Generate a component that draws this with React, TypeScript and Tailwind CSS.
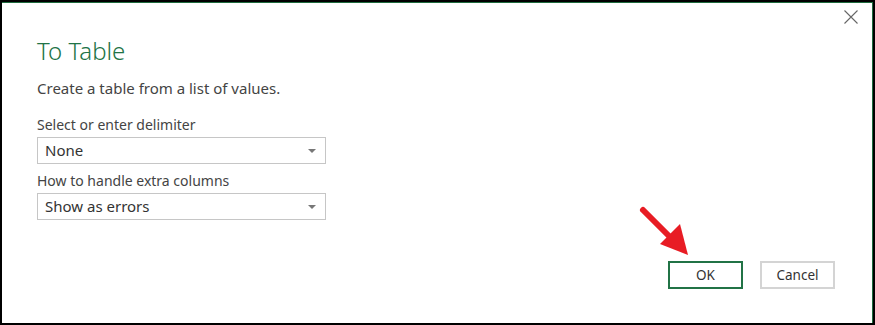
import type { FC } from 'react';

const Caret: FC = () => (
  <svg width="8" height="4" viewBox="0 0 8 4" className="shrink-0">
    <path d="M0 0 H8 L4 4 Z" fill="#777" />
  </svg>
);

const Select: FC<{ value: string }> = ({ value }) => (
  <div className="flex items-center justify-between w-[289px] h-[27px] border border-[#c6c6c6] pl-[7px] pr-[9px] text-[15px] text-[#333]">
    <span>{value}</span>
    <Caret />
  </div>
);

const App: FC = () => {
  return (
    <div
      className="relative w-[875px] h-[325px] bg-white border-2 border-black overflow-hidden"
      style={{ fontFamily: '"Noto Sans", "Open Sans", sans-serif' }}
    >
      <div className="h-full border-t border-r border-[#1e6b3e]">
        <button className="absolute right-[14px] top-[7px] text-[#666]">
          <svg width="16" height="16" viewBox="0 0 16 16">
            <path d="M1.5 1.5 L14.5 14.5 M14.5 1.5 L1.5 14.5" stroke="#666" strokeWidth="1.1" fill="none" />
          </svg>
        </button>

        <div className="flex flex-col h-full pl-[35px] pt-[33px] pr-[37px] pb-[34px]">
          <h1 className="text-[24px] font-light leading-[30px] text-[#217346]">To Table</h1>
          <p className="text-[15px] leading-[20px] text-[#444] mt-[12px]">Create a table from a list of values.</p>

          <label className="text-[14px] leading-[18px] text-[#444] mt-[18px]">Select or enter delimiter</label>
          <div className="mt-[3px]">
            <Select value="None" />
          </div>

          <label className="text-[14px] leading-[18px] text-[#444] mt-[8px]">How to handle extra columns</label>
          <div className="mt-[3px]">
            <Select value="Show as errors" />
          </div>

          <div className="flex justify-end gap-[17px] mt-auto">
            <button className="w-[75px] h-[28px] border-2 border-[#217346] text-[13.5px] text-[#333]">OK</button>
            <button className="w-[75px] h-[28px] border-2 border-[#d4d4d4] text-[13.5px] text-[#333]">Cancel</button>
          </div>
        </div>

        <svg className="absolute left-[634px] top-[200px]" width="60" height="60" viewBox="0 0 60 60">
          <path d="M7 8 L36 37" stroke="#e81c24" strokeWidth="6" strokeLinecap="round" fill="none" />
          <path d="M24 42 L44 22 L52 53 Z" fill="#e81c24" />
        </svg>
      </div>
    </div>
  );
};

export default App;
